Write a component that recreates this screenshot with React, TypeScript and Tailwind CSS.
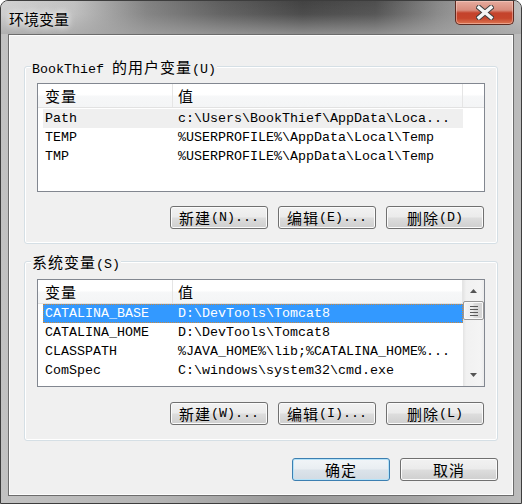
import React from "react";

const CJK_RE = /([\u3000-\u9fff\uff00-\uffef]+)/;

function Mixed({ s }: { s: string }) {
  const parts = s.split(CJK_RE);
  return (
    <>
      {parts.map((p, i) =>
        p === "" ? null : CJK_RE.test(p) ? (
          <span
            key={i}
            className="font-['Noto_Sans_CJK_SC','Noto_Sans_CJK_TC',sans-serif] text-[15px] tracking-[1px]"
          >
            {p}
          </span>
        ) : (
          <span key={i}>{p}</span>
        )
      )}
    </>
  );
}

function Btn({ label, primary }: { label: string; primary?: boolean }) {
  return (
    <button
      type="button"
      className={
        primary
          ? "flex h-[23px] w-[98px] items-center justify-center rounded-[3px] border border-[#3c7fb1] bg-[linear-gradient(to_bottom,#f1f5f8_0%,#e9eef2_48%,#dbe3ea_52%,#d2dbe3_100%)] leading-[21px] text-black shadow-[inset_0_0_0_1px_#b4e2f8]"
          : "flex h-[23px] w-[98px] items-center justify-center rounded-[3px] border border-[#707070] bg-[linear-gradient(to_bottom,#f2f2f2_0%,#ebebeb_48%,#dddddd_52%,#cfcfcf_100%)] leading-[21px] text-black shadow-[inset_0_0_0_1px_#fbfbfb]"
      }
    >
      <Mixed s={label} />
    </button>
  );
}

type Row = [string, string];

function Header({ full }: { full: boolean }) {
  return (
    <div className="flex h-[24px] shrink-0 border-b border-[#e2e2e2] bg-[linear-gradient(to_bottom,#ffffff_0%,#ffffff_45%,#f6f7f8_55%,#f4f5f6_100%)]">
      <div className="flex w-[135px] items-center border-r border-[#e5e5e5] pl-[7px] pt-[2px]">
        <Mixed s="变量" />
      </div>
      <div className="flex w-[290px] items-center border-r border-[#e5e5e5] pl-[5px] pt-[2px]">
        <Mixed s="值" />
      </div>
      {full && <div className="flex-1" />}
    </div>
  );
}

function ScrollBar() {
  return (
    <div className="flex w-[21px] shrink-0 flex-col bg-[linear-gradient(to_right,#e4e4e4_0%,#f1f1f1_15%,#f4f4f4_85%,#ececec_100%)]">
      <div className="flex h-[21px] items-center justify-center">
        <svg width="7" height="4" viewBox="0 0 7 4">
          <path d="M3.5 0 L7 4 L0 4 Z" fill="#555555" />
        </svg>
      </div>
      <div className="relative flex h-[19px] items-center justify-center rounded-[2px] border border-[#979797] bg-[linear-gradient(to_right,#f5f5f5_0%,#ececec_45%,#dcdcdc_55%,#d3d3d3_100%)] shadow-[inset_0_0_0_1px_#fafafa]">
        <div className="flex flex-col gap-[2px]">
          <div className="h-[1px] w-[8px] bg-[#5a5a5a]" />
          <div className="h-[1px] w-[8px] bg-[#5a5a5a]" />
          <div className="h-[1px] w-[8px] bg-[#5a5a5a]" />
          <div className="h-[1px] w-[8px] bg-[#5a5a5a]" />
        </div>
      </div>
      <div className="flex-1" />
      <div className="flex h-[21px] items-center justify-center pb-[2px]">
        <svg width="7" height="4" viewBox="0 0 7 4">
          <path d="M0 0 L7 0 L3.5 4 Z" fill="#555555" />
        </svg>
      </div>
    </div>
  );
}

function List({
  rows,
  selected,
  mode,
  scroll,
  h,
  gap,
}: {
  rows: Row[];
  selected: number;
  mode: "gray" | "blue";
  scroll?: boolean;
  h: string;
  gap?: boolean;
}) {
  return (
    <div className={`flex overflow-hidden border border-[#828790] bg-white ${h}`}>
      <div className="flex min-w-0 flex-1 flex-col">
        <Header full={!scroll} />
        {gap && <div className="h-[1px] shrink-0" />}
        {rows.map((r, i) => {
          const sel = i === selected;
          const cls = sel
            ? mode === "blue"
              ? "bg-[#3399ff] text-white outline-1 outline-dotted outline-[#c9883f] -outline-offset-1"
              : "bg-[#efefef] text-black"
            : "text-black";
          return (
            <div
              key={i}
              className={`ml-[5px] flex h-[19px] w-[420px] shrink-0 whitespace-nowrap leading-[19px] ${cls}`}
            >
              <div className="w-[133px] overflow-hidden pl-[2px]">{r[0]}</div>
              <div className="overflow-hidden pl-[2px]">{r[1]}</div>
            </div>
          );
        })}
      </div>
      {scroll && <ScrollBar />}
    </div>
  );
}

export default function App() {
  const userRows: Row[] = [
    ["Path", "c:\\Users\\BookThief\\AppData\\Loca..."],
    ["TEMP", "%USERPROFILE%\\AppData\\Local\\Temp"],
    ["TMP", "%USERPROFILE%\\AppData\\Local\\Temp"],
  ];
  const sysRows: Row[] = [
    ["CATALINA_BASE", "D:\\DevTools\\Tomcat8"],
    ["CATALINA_HOME", "D:\\DevTools\\Tomcat8"],
    ["CLASSPATH", "%JAVA_HOME%\\lib;%CATALINA_HOME%..."],
    ["ComSpec", "C:\\windows\\system32\\cmd.exe"],
  ];

  return (
    <div className="flex h-[504px] w-[522px] flex-col overflow-hidden rounded-t-[8px] border border-[#3d3d3d] bg-[linear-gradient(to_right,#c2c2c2_0%,#b4b4b4_30%,#9a9a9a_55%,#a6a6a6_80%,#bcbcbc_100%)] font-['Liberation_Mono','Noto_Sans_CJK_SC',monospace] text-[13.33px] text-black">
      {/* Title bar */}
      <div className="flex h-[33px] shrink-0 items-start bg-[image:linear-gradient(to_bottom,rgba(170,170,170,0)_0%,rgba(170,170,170,0.1)_40%,rgba(165,165,165,0.75)_100%),linear-gradient(to_right,#d2d2d2_0%,#c2c2c2_14%,#828282_28%,#5e5e5e_42%,#424242_58%,#4e4e4e_72%,#888888_84%,#c0c0c0_100%)] pl-[8px]">
        <div className="mt-[9px] font-['Noto_Sans_CJK_SC',sans-serif] text-[15px] leading-[18px] text-black [text-shadow:0_0_6px_rgba(255,255,255,0.95),0_0_10px_rgba(255,255,255,0.8)]">
          环境变量
        </div>
        <div className="ml-auto mr-[7px] flex h-[24px] w-[59px] items-center justify-center rounded-b-[5px] border border-t-0 border-[#5e2a20] bg-[linear-gradient(to_bottom,#e6ab9e_0%,#d88c7c_40%,#c4432c_52%,#c6452c_75%,#dd7652_100%)] shadow-[inset_0_0_0_1px_rgba(255,220,210,0.45)]">
          <svg width="18" height="15" viewBox="0 0 18 15">
            <path
              d="M3 2.5 L15 12.5 M15 2.5 L3 12.5"
              stroke="#3b3b3b"
              strokeWidth="5.4"
              strokeLinecap="square"
            />
            <path
              d="M3 2.5 L15 12.5 M15 2.5 L3 12.5"
              stroke="#f4f4f4"
              strokeWidth="3.4"
              strokeLinecap="square"
            />
          </svg>
        </div>
      </div>

      {/* Client area */}
      <div className="mx-[7px] flex h-[462px] shrink-0 flex-col border border-[#6c6c6c] bg-[#f0f0f0] shadow-[inset_0_0_0_1px_#fdfdfd]">
        {/* User variables */}
        <div className="ml-[15px] mt-[31px] flex h-[178px] w-[474px] flex-col rounded-[3px] border border-[#d5dfe5] px-[12px] shadow-[inset_0_0_0_1px_#ffffff]">
          <div className="-ml-[6px] -mt-[8px] h-[16px] self-start bg-[#f0f0f0] px-[1px] leading-[16px]">
            <Mixed s="BookThief 的用户变量(U)" />
          </div>
          <div className="mt-[8px]">
            <List rows={userRows} selected={0} mode="gray" h="h-[109px]" gap />
          </div>
          <div className="mt-[14px] flex justify-end gap-[10px] pr-[1px]">
            <Btn label="新建(N)..." />
            <Btn label="编辑(E)..." />
            <Btn label="删除(D)" />
          </div>
        </div>

        {/* System variables */}
        <div className="ml-[15px] mt-[17px] flex h-[180px] w-[474px] flex-col rounded-[3px] border border-[#d5dfe5] px-[12px] shadow-[inset_0_0_0_1px_#ffffff]">
          <div className="-ml-[6px] -mt-[8px] h-[16px] self-start bg-[#f0f0f0] px-[1px] leading-[16px]">
            <Mixed s="系统变量(S)" />
          </div>
          <div className="mt-[9px]">
            <List rows={sysRows} selected={0} mode="blue" scroll h="h-[108px]" />
          </div>
          <div className="mt-[15px] flex justify-end gap-[10px] pr-[1px]">
            <Btn label="新建(W)..." />
            <Btn label="编辑(I)..." />
            <Btn label="删除(L)" />
          </div>
        </div>

        {/* OK / Cancel */}
        <div className="mt-[17px] flex justify-end gap-[10px] pr-[15px]">
          <Btn label="确定" primary />
          <Btn label="取消" />
        </div>
      </div>
    </div>
  );
}
